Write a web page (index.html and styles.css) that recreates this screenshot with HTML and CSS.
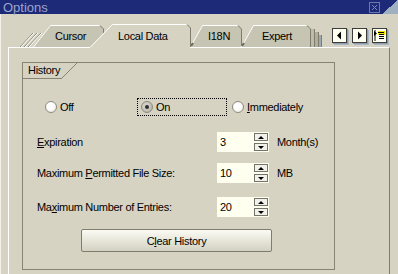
FILE: index.html
```html
<!DOCTYPE html>
<html lang="en">
<head>
    <meta charset="UTF-8">
    <title>Options</title>
    <link rel="stylesheet" href="styles.css">
</head>
<body>
    <div class="window">
        <!-- Barra de título -->
        <div class="titlebar">
            <span class="title">Options</span>
            <span class="close">
                <svg width="11" height="11" viewBox="0 0 11 11">
                    <rect x="0.5" y="0.5" width="10" height="10" fill="none" stroke="#6a78ac"/>
                    <path d="M3 3 L8 8 M8 3 L3 8" stroke="#7d8aba" stroke-width="1"/>
                </svg>
            </span>
            <span class="corner"></span>
        </div>

        <div class="content">
            <!-- Abas -->
            <div class="tabbar">
                <div class="ghost-left">
                    <svg width="30" height="16" viewBox="0 0 30 16">
                        <path d="M2 16 L15 2 M6 16 L19 2 M10 16 L23 2" stroke="#8a8878" stroke-width="1"/>
                        <path d="M3 16 L16 2 M7 16 L20 2 M11 16 L24 2" stroke="#ffffff" stroke-width="1"/>
                    </svg>
                </div>
                <div class="tab tab-cursor">
                    <svg width="71" height="22" viewBox="0 0 71 22">
                        <path d="M0 22 L17 0 L67 0 L70 3 L70 22 Z" fill="#c6c4b2"/>
                        <path d="M0.5 22 L17.5 0.5 L67 0.5" fill="none" stroke="#ffffff"/>
                        <path d="M67 0.5 L70.5 4 L70.5 22" fill="none" stroke="#807d6e"/>
                    </svg>
                    <span>Cursor</span>
                </div>
                <div class="tab tab-active">
                    <svg width="101" height="24" viewBox="0 0 101 24">
                        <path d="M0 23 L22 0 L97 0 L100 3 L100 24 L0 24 Z" fill="#d6d3c3"/>
                        <path d="M0.5 23 L22.5 0.5 L97 0.5" fill="none" stroke="#ffffff"/>
                        <path d="M97 0.5 L100.5 4 L100.5 23" fill="none" stroke="#807d6e"/>
                    </svg>
                    <span>Local Data</span>
                </div>
                <div class="tab tab-i18n">
                    <svg width="52" height="22" viewBox="0 0 52 22">
                        <path d="M0 22 L12 1 L48 0 L51 3 L51 22 Z" fill="#c6c4b2"/>
                        <path d="M0.5 22 L12.5 0.5 L48 0.5" fill="none" stroke="#ffffff"/>
                        <path d="M1 21 L3 18" stroke="#6b6a5e" stroke-width="2"/>
                        <path d="M48 0.5 L51.5 4 L51.5 22" fill="none" stroke="#807d6e"/>
                    </svg>
                    <span>I18N</span>
                </div>
                <div class="tab tab-expert">
                    <svg width="70" height="22" viewBox="0 0 70 22">
                        <path d="M0 22 L12 1 L66 0 L69 3 L69 22 Z" fill="#c6c4b2"/>
                        <path d="M0.5 22 L12.5 0.5 L66 0.5" fill="none" stroke="#ffffff"/>
                        <path d="M1 21 L3 18" stroke="#6b6a5e" stroke-width="2"/>
                        <path d="M66 0.5 L69.5 4 L69.5 22" fill="none" stroke="#807d6e"/>
                    </svg>
                    <span>Expert</span>
                </div>
                <div class="ghost-right">
                    <svg width="12" height="20" viewBox="0 0 12 20">
                        <rect x="0" y="2" width="4" height="18" fill="#bdbba9"/>
                        <rect x="4" y="5" width="4" height="15" fill="#b0ae9c"/>
                        <rect x="8" y="8" width="3" height="12" fill="#9fa9b4"/>
                        <path d="M3.5 2 L3.5 20 M7.5 5 L7.5 20 M10.5 8 L10.5 20" stroke="#807d6e"/>
                    </svg>
                </div>
                <div class="navs">
                    <button class="nav">
                        <svg width="13" height="13" viewBox="0 0 13 13"><path d="M4 6.5 L8 2.5 L8 10.5 Z" fill="#000"/></svg>
                    </button>
                    <button class="nav">
                        <svg width="13" height="13" viewBox="0 0 13 13"><path d="M9 6.5 L5 2.5 L5 10.5 Z" fill="#000"/></svg>
                    </button>
                    <button class="nav">
                        <svg width="13" height="13" viewBox="0 0 13 13">
                            <rect x="5" y="2" width="7" height="4" fill="#f5e000"/>
                            <path d="M1 2 L4 4.5 L1 7 Z" fill="#000"/>
                            <path d="M5 3.5 H11 M6 5.5 H11 M6 7.5 H11 M6 9.5 H11" stroke="#000"/>
                            <path d="M2 1 V12" stroke="#000"/>
                        </svg>
                    </button>
                </div>
            </div>

            <!-- Painel da aba -->
            <div class="panel">
                <div class="group">
                    <div class="legend">
                        <span class="legend-text">History</span>
                        <span class="legend-slant"></span>
                    </div>

                    <div class="radios">
                        <div class="opt opt-off"><span class="radio"></span><span>Off</span></div>
                        <div class="opt opt-on"><span class="radio checked"></span><span>On</span></div>
                        <div class="opt"><span class="radio"></span><span><u>I</u>mmediately</span></div>
                    </div>

                    <div class="field first">
                        <label><u>E</u>xpiration</label>
                        <div class="spin"><span class="val">3</span><span class="arrows"><i class="up"></i><i class="down"></i></span></div>
                        <span class="unit">Month(s)</span>
                    </div>
                    <div class="field second">
                        <label>Maximum <u>P</u>ermitted File Size:</label>
                        <div class="spin"><span class="val">10</span><span class="arrows"><i class="up"></i><i class="down"></i></span></div>
                        <span class="unit">MB</span>
                    </div>
                    <div class="field third">
                        <label>Ma<u>x</u>imum Number of Entries:</label>
                        <div class="spin"><span class="val">20</span><span class="arrows"><i class="up"></i><i class="down"></i></span></div>
                    </div>

                    <button class="clear">C<u>l</u>ear History</button>
                </div>
            </div>
        </div>
    </div>
</body>
</html>
```

FILE: styles.css
```css
body {
    margin: 0;
    padding: 0;
    font-family: "Liberation Sans", Arial, sans-serif;
    font-size: 11px;
    letter-spacing: -0.3px;
    color: #000;
    background-color: #d6d3c3;
}

.window {
    width: 398px;
    height: 274px;
    overflow: hidden;
    background-color: #d6d3c3;
    display: flex;
    flex-direction: column;
}

/* Barra de título */
.titlebar {
    height: 14px;
    display: flex;
    align-items: center;
    background-color: #1c2a78;
}

.titlebar .title {
    padding-left: 3px;
    font-size: 13px;
    letter-spacing: 0;
    color: #9ea5cc;
}

.titlebar .close {
    margin-left: auto;
    margin-right: 2px;
    height: 11px;
}

.titlebar .close svg {
    display: block;
}

.titlebar .corner {
    width: 16px;
    height: 14px;
    background: linear-gradient(to bottom right, #1c2a78 50%, #9fb1c1 50%);
}

.content {
    flex: 1;
    display: flex;
    flex-direction: column;
    border-left: 1px solid #f2f1ea;
}

/* Abas */
.tabbar {
    height: 33px;
    display: flex;
    align-items: flex-end;
    padding-left: 17px;
    position: relative;
    z-index: 1;
}

.ghost-left {
    height: 16px;
    width: 30px;
}

.ghost-left svg,
.ghost-right svg {
    display: block;
}

.tab {
    position: relative;
    height: 22px;
    display: flex;
    align-items: center;
}

.tab svg {
    position: absolute;
    left: 0;
    top: 0;
}

.tab span {
    position: relative;
}

.tab-cursor {
    width: 71px;
    margin-left: -15px;
    padding-left: 22px;
    box-sizing: border-box;
}

.tab-active {
    width: 101px;
    height: 24px;
    margin-left: -14px;
    margin-bottom: -1px;
    padding-left: 28px;
    padding-bottom: 1px;
    box-sizing: border-box;
    z-index: 2;
}

.tab-i18n {
    width: 52px;
    margin-left: -1px;
    padding-left: 18px;
    box-sizing: border-box;
}

.tab-expert {
    width: 70px;
    margin-left: -1px;
    padding-left: 21px;
    box-sizing: border-box;
}

.ghost-right {
    width: 12px;
    height: 20px;
}

.navs {
    align-self: flex-start;
    margin-top: 14px;
    margin-left: 9px;
    display: flex;
    gap: 5px;
}

.nav {
    width: 15px;
    height: 15px;
    padding: 0;
    border: 1px solid #3c3c38;
    background-color: #fffff2;
    box-shadow: 1px 1px 0 #8d9cae, 2px 2px 0 #aab6c2;
    display: flex;
    align-items: center;
    justify-content: center;
}

.nav svg {
    display: block;
}

/* Painel */
.panel {
    flex: 1;
    margin-left: 7px;
    width: 382px;
    box-sizing: border-box;
    border-top: 1px solid #ffffff;
    border-left: 1px solid #ffffff;
    border-right: 1px solid #807d6e;
    padding: 14px 0 0 13px;
}

.group {
    width: 313px;
    height: 208px;
    box-sizing: border-box;
    border: 1px solid #878474;
}

.legend {
    display: flex;
    height: 16px;
}

.legend-text {
    width: 38px;
    padding-left: 5px;
    box-sizing: border-box;
    border-bottom: 1px solid #878474;
    line-height: 15px;
}

.legend-slant {
    width: 16px;
    height: 16px;
    background: linear-gradient(to top left, transparent calc(50% - 0.7px), #878474 50%, transparent calc(50% + 0.7px));
}

/* Opções */
.radios {
    display: flex;
    align-items: center;
    margin-top: 19px;
    padding-left: 22px;
    height: 18px;
}

.opt {
    display: flex;
    align-items: center;
    gap: 3px;
}

.opt-off {
    width: 92px;
}

.opt-on {
    width: 90px;
    height: 18px;
    box-sizing: border-box;
    border: 1px dotted #000;
    padding-left: 3px;
    margin-right: 5px;
}

.radio {
    width: 12px;
    height: 12px;
    box-sizing: border-box;
    border-radius: 50%;
    border: 1px solid #8e8c80;
    background: radial-gradient(circle at 40% 40%, #ffffff 35%, #e4e2d4 100%);
    display: flex;
    align-items: center;
    justify-content: center;
}

.radio.checked {
    background: radial-gradient(circle at 40% 40%, #d2d0c6 30%, #a9a79c 100%);
}

.radio.checked::after {
    content: "";
    width: 4px;
    height: 4px;
    border-radius: 50%;
    background-color: #2c2e2a;
}

/* Campos */
.field {
    display: flex;
    align-items: center;
    height: 20px;
    padding-left: 14px;
}

.field.first {
    margin-top: 16px;
}

.field.second {
    margin-top: 11px;
}

.field.third {
    margin-top: 14px;
}

.field label {
    width: 180px;
}

.spin {
    width: 52px;
    height: 20px;
    background-color: #fffff0;
    display: flex;
    align-items: center;
}

.spin .val {
    flex: 1;
    padding-left: 3px;
}

.spin .arrows {
    display: flex;
    flex-direction: column;
    gap: 2px;
    margin-right: 1px;
}

.spin i {
    width: 14px;
    height: 8px;
    box-sizing: border-box;
    border: 1px solid #74736a;
    background-color: #f3f2ea;
    display: flex;
    align-items: center;
    justify-content: center;
}

.spin i::after {
    content: "";
    border-left: 3px solid transparent;
    border-right: 3px solid transparent;
}

.spin i.up::after {
    border-bottom: 3px solid #000;
}

.spin i.down::after {
    border-top: 3px solid #000;
}

.unit {
    margin-left: 8px;
}

/* Botão */
.clear {
    margin-top: 12px;
    margin-left: 58px;
    width: 191px;
    height: 23px;
    border: 1px solid #7f7c6d;
    border-radius: 2px;
    background: linear-gradient(#fbfbf5, #e9e8dc 45%, #d3d1c2);
    font-family: "Liberation Sans", Arial, sans-serif;
    font-size: 11px;
    letter-spacing: -0.3px;
    color: #000;
    padding: 0;
}
```
